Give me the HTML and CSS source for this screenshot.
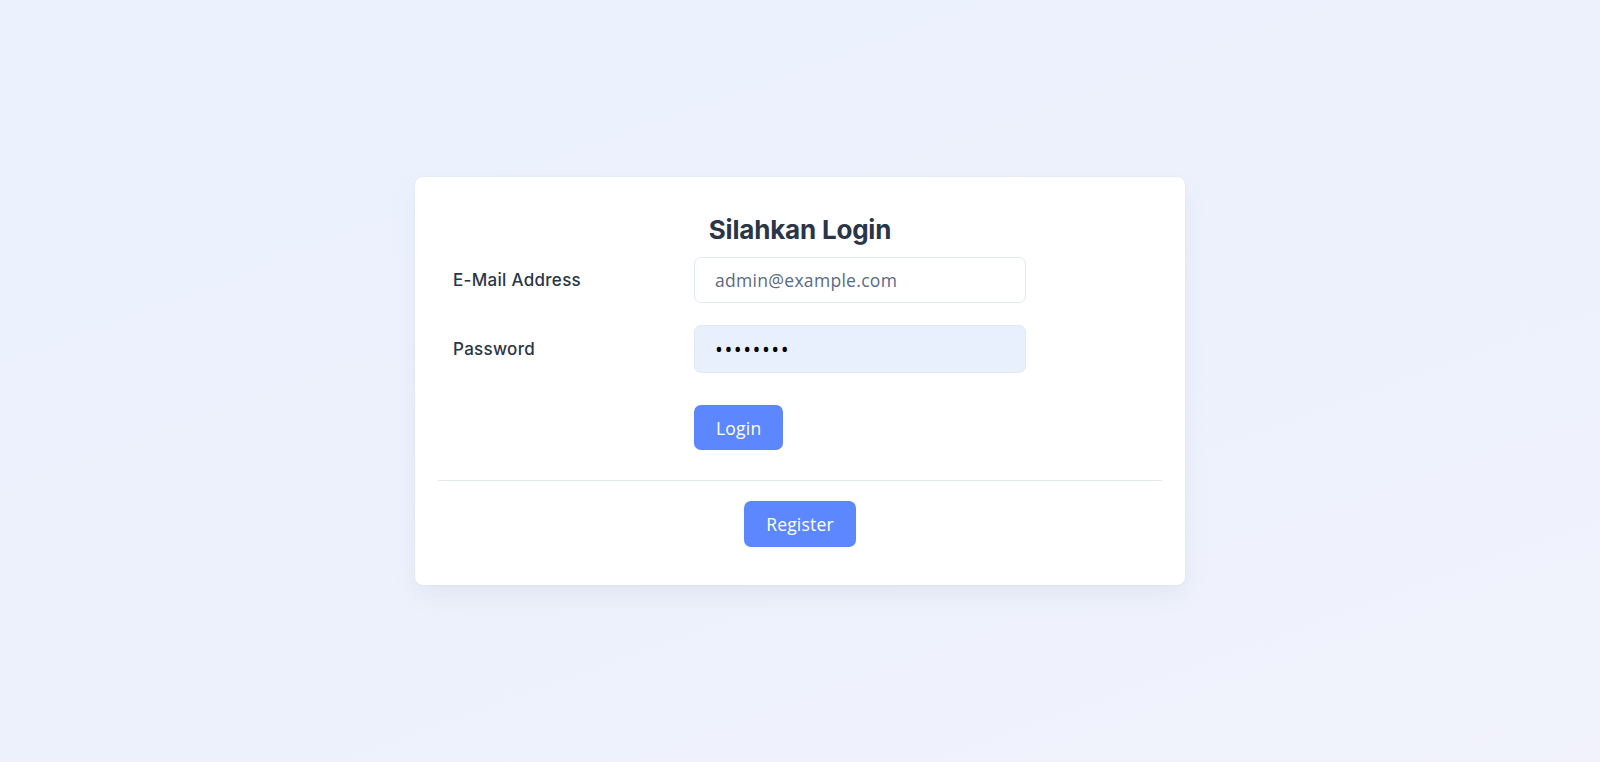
FILE: index.html
```html
<!DOCTYPE html>
<html lang="id">
<head>
<meta charset="utf-8">
<title>Login</title>
<link rel="stylesheet" href="styles.css">
</head>
<body>
<main class="page">
  <section class="card">
    <h1 class="title">Silahkan Login</h1>
    <form class="form">
      <div class="row">
        <label class="label" for="email">E-Mail Address</label>
        <div class="field"><input id="email" class="input" type="email" placeholder="admin@example.com"></div>
      </div>
      <div class="row">
        <label class="label" for="password">Password</label>
        <div class="field"><input id="password" class="input input-filled" type="password" value="password"></div>
      </div>
      <div class="row row-action">
        <div class="label"></div>
        <div class="field"><button type="button" class="btn">Login</button></div>
      </div>
    </form>
    <hr class="divider">
    <div class="footer"><button type="button" class="btn btn-register">Register</button></div>
  </section>
</main>
</body>
</html>
```

FILE: styles.css
```css
* { box-sizing: border-box; }
html, body { margin: 0; height: 100%; }
body {
  font-family: Inter, "Noto Sans", "Liberation Sans", sans-serif;
  background: linear-gradient(160deg, #ebf2fd 0%, #ecf1fc 50%, #f1f2fc 100%);
  color: #2a3547;
}
.page {
  height: 762px;
  display: flex;
  justify-content: center;
  padding-top: 177px;
}
.card {
  width: 770px;
  height: 408px;
  background: #fff;
  border-radius: 8px;
  box-shadow: 0 0 2px rgba(145,158,171,0.2), 0 12px 24px -4px rgba(145,158,171,0.14);
  padding: 34px 23px 0;
}
.title {
  margin: 0;
  text-align: center;
  font-size: 26px;
  font-weight: 700;
  line-height: 38px;
  letter-spacing: -0.2px;
  color: #2a3547;
}
.form {
  margin-top: 8px;
  display: flex;
  flex-direction: column;
  gap: 22px;
}
.row {
  display: flex;
  align-items: center;
}
.row-action { margin-top: 10px; }
.label {
  width: 241px;
  padding: 0 15px;
  font-size: 17px;
  font-weight: 500;
  color: #2a3547;
  letter-spacing: 0.3px;
}
.field { width: 362px; padding: 0 15px; }
.input {
  display: block;
  width: 100%;
  height: 46px;
  border: 1px solid #e3e9f1;
  border-radius: 7px;
  padding: 0 20px;
  font-family: "Open Sans", Roboto, sans-serif;
  font-size: 17.5px;
  letter-spacing: 0.3px;
  color: #2a3547;
  background: #fff;
  outline: none;
}
.input::placeholder { color: #5a6a85; opacity: 1; }
.input-filled {
  background: #e8f0fe;
  height: 48px;
  letter-spacing: 1.5px;
  font-size: 21px;
  color: #000;
}
.btn {
  height: 45px;
  padding: 0 22px;
  border: 0;
  border-radius: 7px;
  background: #5d87ff;
  color: #fff;
  font-family: "Open Sans", Roboto, sans-serif;
  font-size: 17.5px;
  letter-spacing: 0.2px;
  font-weight: 500;
}
.divider {
  margin: 30px 0 20px;
  border: 0;
  border-top: 1px solid #e2e8ef;
}
.footer { display: flex; justify-content: center; }
.btn-register { height: 46px; padding: 0 22px; }
```
